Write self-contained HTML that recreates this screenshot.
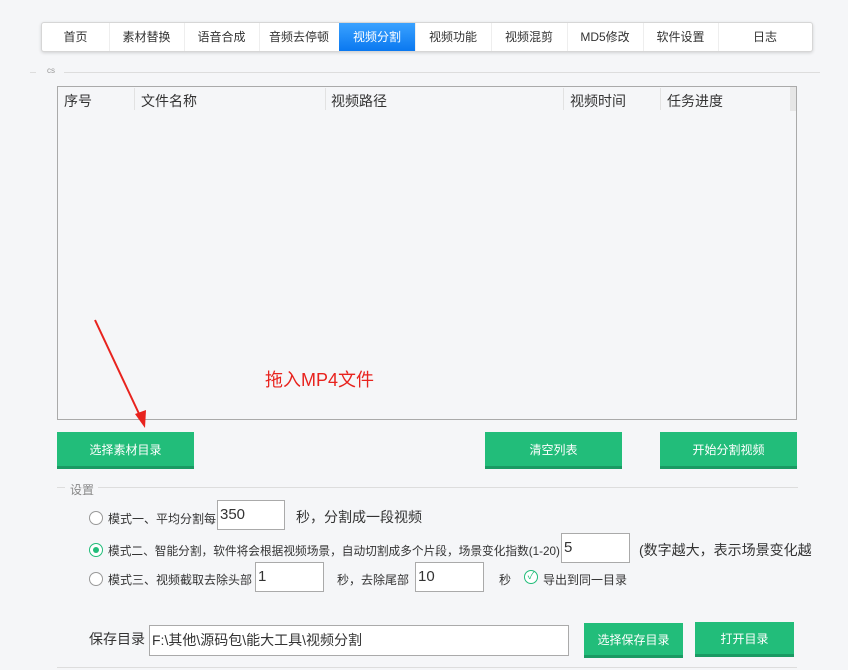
<!DOCTYPE html><html><head><meta charset="utf-8"><style>
body{margin:0;width:848px;height:670px;background:#f5f6f8;position:relative;overflow:hidden;font-family:"Liberation Sans","Noto Sans CJK SC",sans-serif;color:#333}
.a{position:absolute}
.tabs{left:41px;top:22px;width:770px;height:28px;background:#fff;border:1px solid #d6d6d6;border-radius:3px;box-shadow:0 1px 3px rgba(0,0,0,.15)}
.tab{position:absolute;top:0;height:28px;line-height:28px;text-align:center;font-size:12px;border-right:1px solid #eee}
.on{background:linear-gradient(#3aa2ff,#0a78f0);color:#fff}
.btn{position:absolute;background:#22bd7a;color:#fff;font-size:12px;text-align:center;border-bottom:3px solid #1a9a63;box-sizing:border-box}
.inp{position:absolute;background:#fff;border:1px solid #aaa;box-sizing:border-box;font-size:15px;padding-left:2px;line-height:28px}
.t{position:absolute;font-size:12px;white-space:nowrap}
.radio{position:absolute;width:12px;height:12px;border:1px solid #999;border-radius:50%;background:#fff}
</style></head><body>
<div class="a tabs">
<div class="tab" style="left:0;width:67px">首页</div>
<div class="tab" style="left:67px;width:75px">素材替换</div>
<div class="tab" style="left:142px;width:75px">语音合成</div>
<div class="tab" style="left:217px;width:80px">音频去停顿</div>
<div class="tab on" style="left:297px;width:76px">视频分割</div>
<div class="tab" style="left:373px;width:76px">视频功能</div>
<div class="tab" style="left:449px;width:76px">视频混剪</div>
<div class="tab" style="left:525px;width:76px">MD5修改</div>
<div class="tab" style="left:601px;width:75px">软件设置</div>
<div class="tab" style="left:676px;width:94px;border:none">日志</div>
</div>
<div class="a" style="left:30px;top:72px;width:6px;height:1px;background:#ddd"></div>
<div class="t" style="left:47px;top:66px;font-size:8px;color:#999">cs</div>
<div class="a" style="left:64px;top:72px;width:756px;height:1px;background:#ddd"></div>
<div class="a" style="left:57px;top:86px;width:740px;height:334px;border:1px solid #aaa;background:#f5f6f8;box-sizing:border-box"></div>
<div class="a" style="left:790px;top:87px;width:6px;height:24px;background:#e6e6e6"></div>
<div class="t" style="left:64px;top:91px;font-size:14px">序号</div>
<div class="t" style="left:141px;top:91px;font-size:14px">文件名称</div>
<div class="t" style="left:331px;top:91px;font-size:14px">视频路径</div>
<div class="t" style="left:570px;top:91px;font-size:14px">视频时间</div>
<div class="t" style="left:667px;top:91px;font-size:14px">任务进度</div>
<div class="a" style="left:134px;top:88px;width:1px;height:22px;background:#e2e2e2"></div>
<div class="a" style="left:325px;top:88px;width:1px;height:22px;background:#e2e2e2"></div>
<div class="a" style="left:563px;top:88px;width:1px;height:22px;background:#e2e2e2"></div>
<div class="a" style="left:660px;top:88px;width:1px;height:22px;background:#e2e2e2"></div>
<div class="t" style="left:265px;top:366px;font-size:18px;color:#e8231e">拖入MP4文件</div>
<svg class="a" style="left:0;top:0" width="848" height="670"><line x1="95" y1="320" x2="141" y2="418" stroke="#e8231e" stroke-width="2"/><polygon points="145,428 135,414 146,410" fill="#e8231e"/></svg>
<div class="btn" style="left:57px;top:432px;width:137px;height:37px;line-height:36px">选择素材目录</div>
<div class="btn" style="left:485px;top:432px;width:137px;height:37px;line-height:36px">清空列表</div>
<div class="btn" style="left:660px;top:432px;width:137px;height:37px;line-height:36px">开始分割视频</div>
<div class="a" style="left:57px;top:487px;width:8px;height:1px;background:#ddd"></div>
<div class="t" style="left:70px;top:481px;color:#888">设置</div>
<div class="a" style="left:98px;top:487px;width:700px;height:1px;background:#ddd"></div>
<div class="radio" style="left:89px;top:511px"></div>
<div class="t" style="left:108px;top:510px">模式一、平均分割每</div>
<div class="inp" style="left:217px;top:500px;width:68px;height:30px">350</div>
<div class="t" style="left:296px;top:507px;font-size:14px">秒，分割成一段视频</div>
<div class="radio" style="left:89px;top:543px;border-color:#22bd7a"><div style="position:absolute;left:3px;top:3px;width:6px;height:6px;border-radius:50%;background:#22bd7a"></div></div>
<div class="t" style="left:108px;top:542px;font-size:11.7px">模式二、智能分割，软件将会根据视频场景，自动切割成多个片段，场景变化指数(1-20)</div>
<div class="inp" style="left:561px;top:533px;width:69px;height:30px">5</div>
<div class="t" style="left:639px;top:540px;font-size:14px">(数字越大，表示场景变化越</div>
<div class="radio" style="left:89px;top:572px"></div>
<div class="t" style="left:108px;top:571px">模式三、视频截取去除头部</div>
<div class="inp" style="left:255px;top:562px;width:69px;height:30px">1</div>
<div class="t" style="left:337px;top:571px">秒，去除尾部</div>
<div class="inp" style="left:415px;top:562px;width:69px;height:30px">10</div>
<div class="t" style="left:499px;top:571px">秒</div>
<div class="radio" style="left:524px;top:570px;border-color:#22bd7a;color:#22bd7a;font-size:10px;line-height:12px;text-align:center">✓</div>
<div class="t" style="left:543px;top:571px">导出到同一目录</div>
<div class="t" style="left:89px;top:629px;font-size:14px">保存目录</div>
<div class="inp" style="left:149px;top:625px;width:420px;height:31px;font-size:14px">F:\其他\源码包\能大工具\视频分割</div>
<div class="btn" style="left:584px;top:623px;width:99px;height:35px;line-height:34px">选择保存目录</div>
<div class="btn" style="left:695px;top:622px;width:99px;height:35px;line-height:34px">打开目录</div>
<div class="a" style="left:57px;top:667px;width:740px;height:1px;background:#ddd"></div>
</body></html>
